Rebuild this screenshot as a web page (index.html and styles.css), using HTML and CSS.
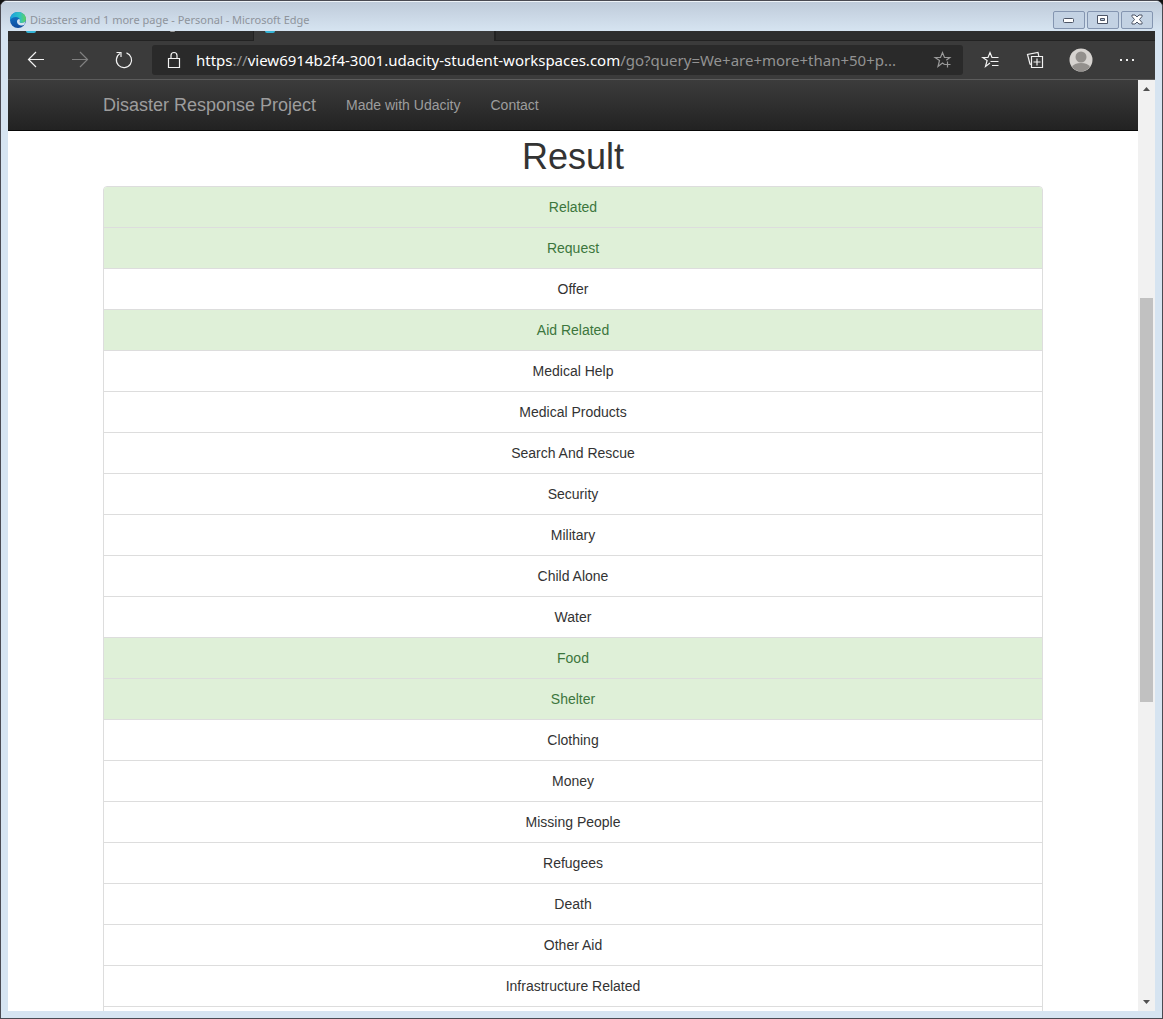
FILE: index.html
```html
<!DOCTYPE html>
<html lang="en">
<head>
<meta charset="utf-8">
<title>Disasters</title>
<link rel="stylesheet" href="styles.css">
</head>
<body>
<div class="window">
  <header class="titlebar">
    <svg class="edge-logo" viewBox="0 0 16 16" aria-hidden="true">
      <defs>
        <linearGradient id="sea" x1="0" y1="0" x2="1" y2="0"><stop offset="0" stop-color="#1c9fe0"/><stop offset=".6" stop-color="#2fc2c4"/><stop offset="1" stop-color="#62d25a"/></linearGradient>
        <linearGradient id="deep" x1="0" y1="0" x2="0" y2="1"><stop offset="0" stop-color="#1580d0"/><stop offset="1" stop-color="#104a9c"/></linearGradient>
      </defs>
      <circle cx="8" cy="8" r="8" fill="url(#deep)"/>
      <path d="M0 8C0 3.500 3.500 0 8 0s8 3.200 8 7c0 2.500-1.800 4-4 4-1.800 0-2.800-.8-2.300-1.600C10.500 8 9.500 5 6 5 3 5 .8 6.500 0 8z" fill="url(#sea)"/>
      <path d="M9.700 9.400C9.200 10.200 10.200 11 12 11c1.400 0 2.700-.6 3.400-1.700L14.500 12.600C12.500 14.500 7 13.500 7 9.500 7 8 8 7 9.200 7c.8.800.9 1.700.5 2.400z" fill="#d3e2f0"/>
    </svg>
    <span class="caption">Disasters and 1 more page - Personal - Microsoft Edge</span>
    <div class="caption-buttons">
      <button class="caption-button" aria-label="Minimize"><svg viewBox="0 0 12 12"><rect x=".5" y="4.500" width="10" height="4" rx="1" fill="#fff" stroke="#4d5566"/></svg></button>
      <button class="caption-button" aria-label="Maximize"><svg viewBox="0 0 12 12"><path d="M.5 1.500h10v8H.5z" fill="#fff" stroke="#4d5566"/><path d="M3.500 4.500h4v2h-4z" fill="#b9c9dc" stroke="#4d5566"/></svg></button>
      <button class="caption-button" aria-label="Close"><svg viewBox="0 0 12 12"><path d="M1 1h3l2 2 2-2h3v1.500L8.500 5.500 11 8.500V10H8L6 8l-2 2H1V8.500l2.500-3L1 2.500z" fill="#fff" stroke="#4d5566"/></svg></button>
    </div>
  </header>

  <div class="tabstrip">
    <div class="tab tab-back"><i class="favicon"></i><i class="speck"></i></div>
    <div class="tab tab-current"><i class="favicon"></i></div>
    <div class="tab-rest"></div>
  </div>

  <div class="toolbar">
    <button class="tool" aria-label="Back"><svg viewBox="0 0 20 20"><path d="M18 9.500H2.500M10 2 2.500 9.500 10 17"/></svg></button>
    <button class="tool tool-off" aria-label="Forward" disabled><svg viewBox="0 0 20 20"><path d="M2 9.500h15.500M10 2l7.500 7.500L10 17"/></svg></button>
    <button class="tool" aria-label="Refresh"><svg viewBox="0 0 20 20"><path d="M12.500 2.900a7.600 7.600 0 1 1-6.500.7M2.500 2.500H7V7"/></svg></button>
    <div class="address">
      <svg class="lock" viewBox="0 0 20 20" aria-hidden="true"><path d="M4.500 8.500h11v9h-11zM7 8.500V5.500a3 3 0 0 1 6 0v3"/></svg>
      <div class="url" role="textbox" aria-label="Address" tabindex="0"><b>https</b>://<b>view6914b2f4-3001.udacity-student-workspaces.com</b>/go?query=We+are+more+than+50+p...</div>
      <button class="favorite" aria-label="Add to favorites"><svg viewBox="0 0 20 20"><path d="M11.500 14.500 9.500 13 5 16.500l1.500-6L2.200 7.500h5.300l2-5 2 5h5.300l-3.500 2.700M14.500 11.500v6M11.500 14.500h6"/></svg></button>
    </div>
    <div class="actions">
      <button class="tool" aria-label="Favorites"><svg viewBox="0 0 20 20"><path d="M9 13 4.500 16.500l1.600-6L1.800 7.500H7L9 2.500l2 5h6.500M9.500 11.500h8M11 15.500h6.500"/></svg></button>
      <button class="tool" aria-label="Collections"><svg viewBox="0 0 20 20"><path d="M6.500 6.500h11v11h-11zM12 8.500v7M8.500 12h7M6 14.500 5 14 2.500 4.500 13 2.500l.8 3.500"/></svg></button>
      <button class="tool avatar" aria-label="Profile"><svg viewBox="0 0 24 24"><circle cx="12" cy="12" r="11.500" fill="#d6d3d0"/><circle cx="12" cy="9" r="5.500" fill="#93908d"/><path d="M3 19a9.500 6 0 0 1 18 0 11.500 11.500 0 0 1-18 0z" fill="#93908d"/></svg></button>
      <button class="tool" aria-label="Settings and more"><svg viewBox="0 0 20 20"><path class="dots" d="M3 9h2v2H3zM9 9h2v2H9zM15 9h2v2h-2z"/></svg></button>
    </div>
  </div>

  <div class="viewport">
    <div class="page">
      <nav class="navbar">
        <div class="container nav-row">
          <a class="brand" href="#">Disaster Response Project</a>
          <a class="nav-link" href="#">Made with Udacity</a>
          <a class="nav-link" href="#">Contact</a>
        </div>
      </nav>
      <main class="container">
        <h1>Result</h1>
        <ul class="list-group">
          <li class="hit">Related</li>
          <li class="hit">Request</li>
          <li>Offer</li>
          <li class="hit">Aid Related</li>
          <li>Medical Help</li>
          <li>Medical Products</li>
          <li>Search And Rescue</li>
          <li>Security</li>
          <li>Military</li>
          <li>Child Alone</li>
          <li>Water</li>
          <li class="hit">Food</li>
          <li class="hit">Shelter</li>
          <li>Clothing</li>
          <li>Money</li>
          <li>Missing People</li>
          <li>Refugees</li>
          <li>Death</li>
          <li>Other Aid</li>
          <li>Infrastructure Related</li>
          <li></li>
        </ul>
      </main>
    </div>
    <div class="scrollbar" aria-hidden="true">
      <i class="arrow arrow-up"></i>
      <div class="track"><div class="before"></div><div class="thumb"></div><div class="after"></div></div>
      <i class="arrow arrow-down"></i>
    </div>
  </div>
</div>
</body>
</html>
```
FILE: styles.css
```css
* { box-sizing: border-box; }

body {
  margin: 0;
  background: #111;
  font: 14px/20px "Liberation Sans", Arial, sans-serif;
  color: #333;
}

button {
  margin: 0;
  padding: 0;
  border: 0;
  background: none;
}

svg { display: block; }

.window {
  display: flex;
  flex-direction: column;
  height: 100vh;
  padding: 0 7px 7px;
  border: 1px solid #4a4a52;
  border-radius: 7px 7px 0 0;
  background: #d6e4f1;
  overflow: hidden;
}

/* Title bar */
.titlebar {
  display: flex;
  flex: none;
  align-items: center;
  height: 30px;
  margin: 0 -7px;
  padding: 6px 9px 0;
  border-top: 1px solid #eef3f8;
  background: linear-gradient(#bfcbda, #d6e4f1);
}

.edge-logo {
  width: 16px;
  height: 16px;
  margin-right: 4px;
}

.caption {
  flex: 1;
  color: #8e949c;
  font: 11px/16px "Noto Sans", sans-serif;
  white-space: nowrap;
}

.caption-buttons {
  display: flex;
  gap: 2px;
}

.caption-button {
  display: flex;
  align-items: center;
  justify-content: center;
  width: 32px;
  height: 18px;
  border: 1px solid #8495b0;
  border-radius: 2px;
  background: #c3d2e3;
}

.caption-button svg {
  width: 12px;
  height: 12px;
}

/* Tab strip */
.tabstrip {
  display: flex;
  flex: none;
  height: 10px;
  background: #3b3b3b;
}

.tab {
  display: flex;
  justify-content: space-between;
  padding: 0 78px 0 18px;
  overflow: hidden;
}

.tab-back {
  width: 246px;
  border-right: 1px solid #222;
  border-bottom: 1px solid #222;
  background: #2d2d2d;
}

.tab-current { width: 240px; padding-left: 11px; }

.tab-rest {
  flex: 1;
  border-bottom: 1px solid #222;
  border-left: 2px solid #222;
  background: #2d2d2d;
}

.favicon, .speck {
  width: 10px;
  height: 2px;
  border-radius: 0 0 5px 5px;
  background: #35b5d8;
}

.speck { width: 5px; height: 1px; background: #999; }

/* Toolbar */
.toolbar {
  display: flex;
  flex: none;
  align-items: center;
  height: 39px;
  padding: 0 18px;
  border-bottom: 1px solid #5c5c5c;
  background: #3b3b3b;
}

.tool {
  display: flex;
  width: 20px;
  margin-right: 24px;
}

.tool svg, .lock, .favorite svg {
  width: 20px;
  height: 20px;
  fill: none;
  stroke: #f2f2f2;
  stroke-width: 1.2;
}

.tool .dots { fill: #eee; stroke: none; }

.tool-off svg { stroke: #808080; }

.address {
  display: flex;
  flex: 1;
  align-items: center;
  gap: 12px;
  height: 30px;
  min-width: 0;
  margin-left: -6px;
  padding: 0 10px 0 12px;
  border-radius: 3px;
  background: #2a2a2a;
}

.lock { flex: none; }

.url {
  flex: 1;
  color: #939393;
  font: 15px/22px "Noto Sans", sans-serif;
  white-space: nowrap;
  overflow: hidden;
}

.url b { color: #fff; font-weight: 400; }

.favorite svg { stroke: #999; }

.actions {
  display: flex;
  align-items: center;
  gap: 24px;
  margin-left: 18px;
}

.actions .tool { margin: 0; }

.actions .avatar { width: 24px; }

.avatar svg {
  width: 24px;
  height: 24px;
  stroke: none;
}

/* Page area */
.viewport {
  display: flex;
  flex: 1;
  min-height: 0;
  background: #fff;
}

.page {
  flex: 1;
  min-width: 0;
  overflow: hidden;
}

.container {
  max-width: 970px;
  margin: 0 auto;
  padding: 0 15px;
}

.navbar {
  border-bottom: 1px solid #080808;
  background: linear-gradient(#3c3c3c, #222);
}

.nav-row {
  display: flex;
  align-items: center;
  gap: 30px;
  height: 50px;
}

.navbar a {
  color: #9d9d9d;
  text-decoration: none;
}

.navbar .brand { font-size: 18px; }

h1 {
  margin: 6px 0 9px;
  font-size: 36px;
  font-weight: 400;
  line-height: 40px;
  text-align: center;
}

.list-group {
  margin: 0;
  padding: 0;
  border: 1px solid #ddd;
  border-radius: 4px;
  list-style: none;
  text-align: center;
  overflow: hidden;
}

.list-group li {
  min-height: 41px;
  padding: 10px 15px;
  border-bottom: 1px solid #ddd;
}

.list-group .hit {
  background: #dff0d8;
  color: #3c763d;
}

/* Scroll bar */
.scrollbar {
  display: flex;
  flex-direction: column;
  width: 17px;
  background: #f1f1f1;
}

.arrow {
  height: 17px;
  padding: 7px 5px;
}

.arrow::before {
  display: block;
  width: 7px;
  height: 4px;
  background: #505050;
  clip-path: polygon(50% 0, 100% 100%, 0 100%);
  content: "";
}

.arrow-down { padding-top: 6px; }

.arrow-down::before { clip-path: polygon(0 0, 100% 0, 50% 100%); }

.track {
  display: flex;
  flex: 1;
  flex-direction: column;
  padding: 0 2px;
}

.before { flex: 201; }

.thumb { flex: 404; background: #c1c1c1; }

.after { flex: 292; }
```
